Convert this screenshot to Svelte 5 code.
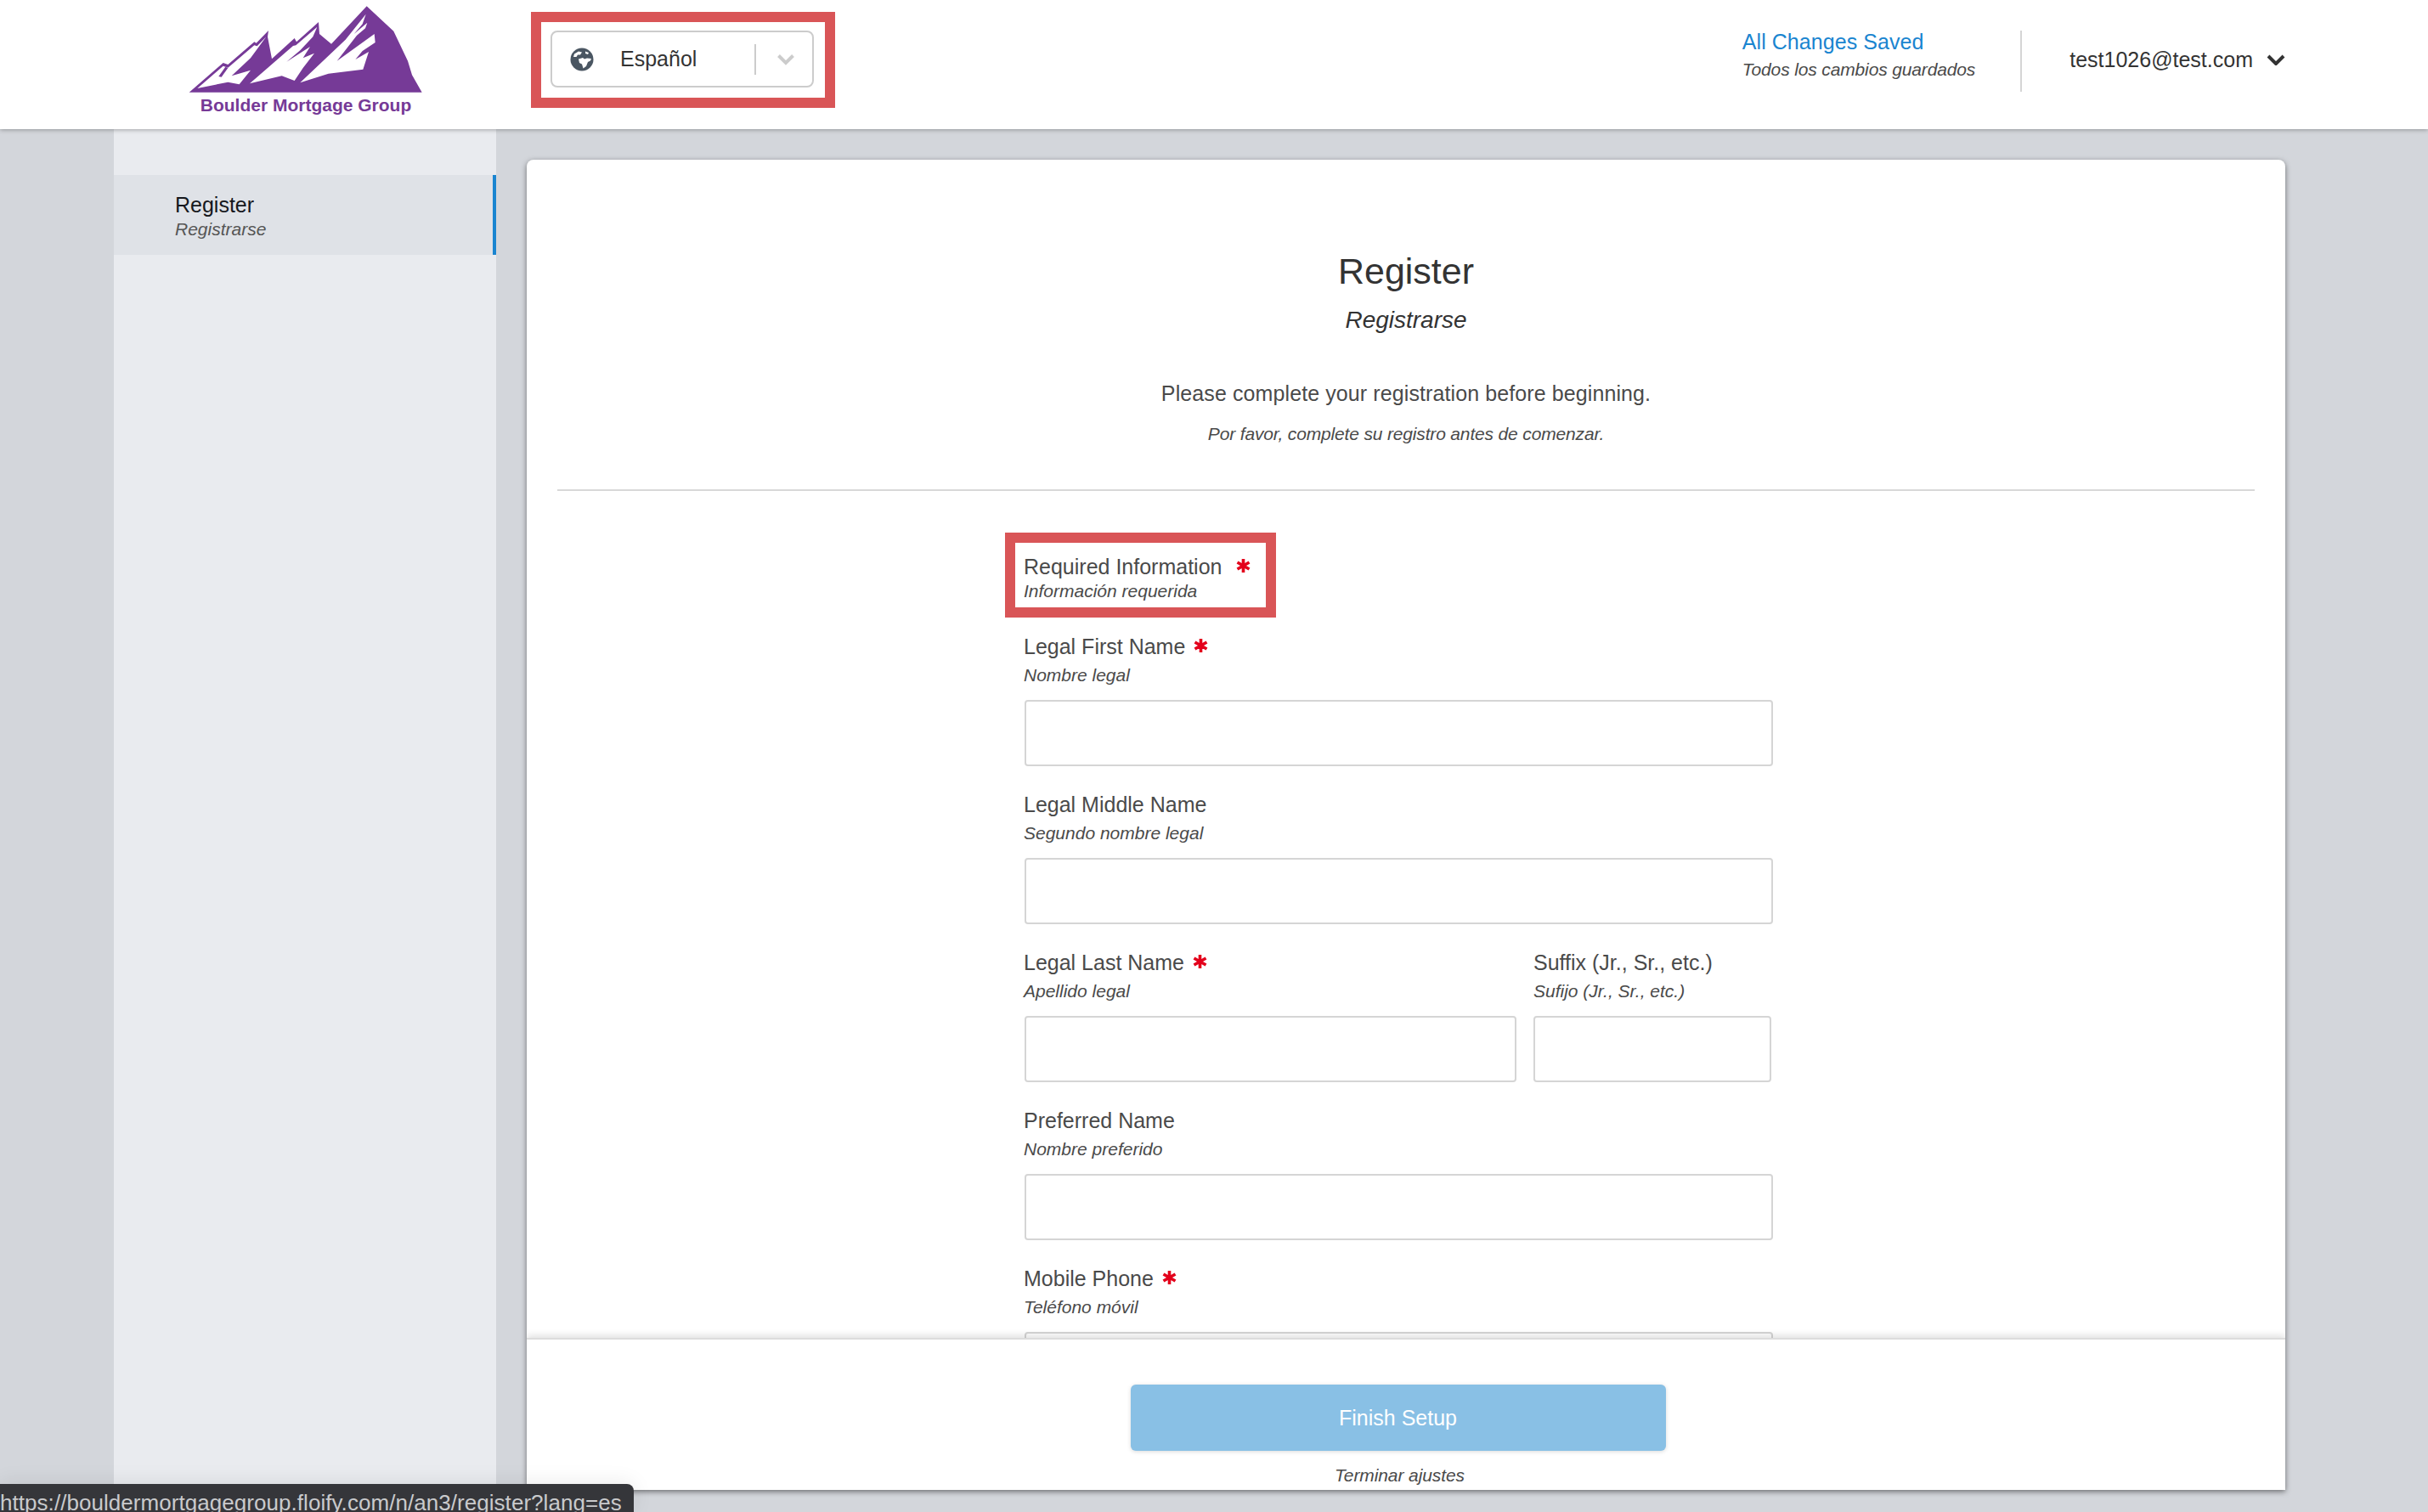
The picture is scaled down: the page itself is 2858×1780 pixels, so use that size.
<script>
  const rows = [
    [{ label: 'Legal First Name', sub: 'Nombre legal', req: true, cls: 'full' }],
    [{ label: 'Legal Middle Name', sub: 'Segundo nombre legal', cls: 'full' }],
    [
      { label: 'Legal Last Name', sub: 'Apellido legal', req: true, cls: 'wide' },
      { label: 'Suffix (Jr., Sr., etc.)', sub: 'Sufijo (Jr., Sr., etc.)', cls: 'narrow' }
    ],
    [{ label: 'Preferred Name', sub: 'Nombre preferido', cls: 'full' }],
    [{ label: 'Mobile Phone', sub: 'Teléfono móvil', req: true, cls: 'full' }]
  ];
</script>

{#snippet star()}
  <svg class="star" viewBox="0 0 16 16" aria-hidden="true">
    <path d="M8 0.5V15.5M1.4 4.2L14.6 11.8M14.6 4.2L1.4 11.8" />
  </svg>
{/snippet}

<div class="page">
  <header class="top">
    <div class="logo">
      <svg class="peaks" viewBox="0 0 960 330" aria-hidden="true">
        <path class="m" d="M68 326L188 222L205 228L298 148L305 152L348 108L345 130L360 208L440 135L447 148L525 78L528 120L570 155L695 22L790 110L840 215L855 265L890 326Z" />
        <path class="w" d="M97 312L188 233L205 239L298 160L308 163L340 130L285 205L218 268L285 248L245 298L205 290Z" />
        <path class="m" d="M172 270L196 236L205 240L182 272Z" />
        <path class="w" d="M282 295L435 162L445 160L520 95L505 130L460 178L412 218L495 165L470 205L510 188L470 240L440 285L395 268Z" />
        <path class="w" d="M460 292L620 140L692 50L680 85L650 120L697 80L690 100L660 125L590 215L722 120L725 150L680 180L655 210L702 183L682 245L560 260Z" />
      </svg>
      <div class="brand">Boulder Mortgage Group</div>
    </div>
    <div class="redbox lang">
      <div class="select">
        <svg class="globe" viewBox="0 0 28 28" aria-hidden="true">
          <circle cx="14" cy="14" r="13.5" fill="#4a5662" />
          <path d="M5 7.5L10 4.5L14 5.5L12 8.5L9 8.5L7.5 11L4 11ZM10 13.5L15 12L17 13.5L20 12.5L25 13L24 15.5L21 17L19 22L15.5 24.5L14 19.5L11 18Z" fill="#fff" />
          <path d="M18 4.5L22 6L21 8L18 7Z" fill="#fff" />
        </svg>
        <span class="lang-name">Español</span>
        <span class="sep"></span>
        <svg class="caret" viewBox="0 0 22 14" aria-hidden="true"><path d="M2.5 2.5L11 11L19.5 2.5" /></svg>
      </div>
    </div>
    <div class="right">
      <div class="saved">
        <div class="saved-en">All Changes Saved</div>
        <div class="saved-es">Todos los cambios guardados</div>
      </div>
      <div class="user">
        <span>test1026@test.com</span>
        <svg class="usercaret" viewBox="0 0 22 13" aria-hidden="true"><path d="M2 2L11 11L20 2" /></svg>
      </div>
    </div>
  </header>

  <div class="body">
    <aside class="side">
      <div class="item">
        <div class="item-en">Register</div>
        <div class="item-es">Registrarse</div>
      </div>
    </aside>
    <main class="card">
      <div class="scroll">
        <h1>Register</h1>
        <div class="h-es">Registrarse</div>
        <p class="intro">Please complete your registration before beginning.</p>
        <p class="intro-es">Por favor, complete su registro antes de comenzar.</p>
        <hr />
        <div class="form">
          <div class="redbox req">
            <div class="lbl">Required Information {@render star()}</div>
            <div class="sub tight">Información requerida</div>
          </div>
          {#each rows as row}
            <div class="row">
              {#each row as f}
                <div class="field {f.cls}">
                  <div class="lbl">{f.label}{#if f.req}{@render star()}{/if}</div>
                  <div class="sub">{f.sub}</div>
                  <div class="input"></div>
                </div>
              {/each}
            </div>
          {/each}
        </div>
      </div>
      <footer class="foot">
        <button class="finish" type="button">Finish Setup</button>
        <div class="finish-es">Terminar ajustes</div>
      </footer>
    </main>
  </div>

  <div class="status">https://bouldermortgagegroup.floify.com/n/an3/register?lang=es</div>
</div>

<style>
  :global(body) { margin: 0; }
  .page {
    position: relative;
    width: 2858px;
    height: 1780px;
    overflow: hidden;
    display: flex;
    flex-direction: column;
    background: #d3d6db;
    font-family: "Liberation Sans", Arial, sans-serif;
    color: #4a4a4a;
  }
  .top {
    position: relative;
    z-index: 2;
    flex: 0 0 152px;
    display: flex;
    align-items: flex-start;
    background: #fff;
    box-shadow: 0 1px 5px rgba(0, 0, 0, 0.3);
    padding-left: 200px;
    padding-right: 168px;
  }
  .logo { width: 320px; }
  .peaks { display: block; width: 320px; height: 110px; }
  .m { fill: #763a97; }
  .w { fill: #fff; }
  .brand {
    text-align: center;
    font-size: 21px;
    line-height: 28px;
    font-weight: 700;
    color: #763a97;
  }
  .redbox { border: 12px solid #d95557; box-sizing: border-box; background: #fff; }
  .lang {
    margin: 14px 0 0 105px;
    width: 358px;
    height: 113px;
    padding: 10px 11px;
  }
  .select {
    box-sizing: border-box;
    height: 67px;
    width: 310px;
    border: 2px solid #ccc;
    border-radius: 8px;
    display: flex;
    align-items: center;
  }
  .globe { width: 28px; height: 28px; margin-left: 21px; }
  .lang-name { margin-left: 31px; font-size: 25px; color: #333; width: 158px; }
  .sep { width: 2px; height: 36px; background: #ccc; }
  .caret { width: 22px; height: 14px; margin-left: 24px; }
  .caret path { fill: none; stroke: #ccc; stroke-width: 4; }
  .right { margin-left: auto; display: flex; height: 72px; margin-top: 36px; }
  .saved { padding-right: 53px; }
  .saved-en { font-size: 25px; line-height: 28px; margin-top: -1px; color: #1a85d0; letter-spacing: 0.06px; }
  .saved-es { font-size: 21px; line-height: 26px; margin-top: 6px; font-style: italic; color: #4a4a4a; letter-spacing: -0.14px; }
  .user {
    border-left: 2px solid #d5d5d5;
    padding-left: 56px;
    padding-bottom: 4px;
    box-sizing: border-box;
    display: flex;
    align-items: center;
    gap: 16px;
    font-size: 25px;
    color: #333;
    height: 72px;
  }
  .usercaret { width: 22px; height: 13px; }
  .usercaret path { fill: none; stroke: #333; stroke-width: 4; }

  .body { flex: 1; display: flex; min-height: 0; padding-left: 134px; }
  .side { width: 450px; background: #e9ebef; padding-top: 54px; box-sizing: border-box; }
  .item {
    box-sizing: border-box;
    height: 94px;
    background: #dfe2e7;
    border-right: 4px solid #1a85d0;
    padding: 21px 0 0 72px;
  }
  .item-en { font-size: 25px; line-height: 28px; color: #16181d; }
  .item-es { margin-top: 2px; font-size: 21px; line-height: 26px; font-style: italic; color: #555; }
  .card {
    width: 2070px;
    margin: 36px 0 26px 36px;
    background: #fff;
    border-radius: 8px 8px 0 0;
    box-shadow: 0 2px 6px rgba(0, 0, 0, 0.5);
    display: flex;
    flex-direction: column;
    overflow: hidden;
  }
  .scroll { flex: 1; min-height: 0; overflow: hidden; padding: 0 36px; }
  h1 {
    margin: 104px 0 0;
    text-align: center;
    font-size: 43px;
    line-height: 54px;
    font-weight: 400;
    color: #333;
  }
  .h-es { margin-top: 14px; text-align: center; font-size: 28px; line-height: 34px; font-style: italic; color: #333; }
  .intro { margin: 53px 0 0; text-align: center; font-size: 25px; line-height: 32px; color: #4a4a4a; letter-spacing: 0.1px; }
  .intro-es { margin: 19px 0 0; text-align: center; font-size: 21px; line-height: 26px; font-style: italic; color: #4a4a4a; letter-spacing: -0.16px; }
  hr { margin: 52px 0 0; border: 0; border-top: 2px solid #d8d8d8; }
  .form { margin-left: 527px; width: 920px; }
  .req {
    margin: 49px 0 0 0;
    width: 319px;
    height: 100px;
    padding: 13px 0 0 10px;
  }
  .lbl { display: flex; align-items: center; font-size: 25px; line-height: 30px; color: #4a4a4a; white-space: pre; }
  .sub { margin-top: 5px; font-size: 21px; line-height: 28px; font-style: italic; color: #4a4a4a; }
  .tight { margin-top: 2px; line-height: 24px; }
  .star { width: 17px; height: 18px; margin-left: 10px; margin-top: -2px; }
  .star path { fill: none; stroke: #e3001b; stroke-width: 3.4; }
  .row { display: flex; gap: 20px; margin-left: 22px; margin-top: 19px; }
  .row + .row { margin-top: 30px; }
  .field { min-width: 0; }
  .full { width: 882px; }
  .wide { width: 580px; }
  .narrow { width: 280px; }
  .input {
    box-sizing: border-box;
    margin-top: 15px;
    margin-left: 1px;
    height: 78px;
    border: 2px solid #d5d5d5;
    border-radius: 4px;
    background: #fff;
  }
  .narrow .input { margin-left: 0; }
  .foot {
    position: relative;
    flex: 0 0 179px;
    background: #fff;
    border-top: 2px solid #dcdcdc;
    box-sizing: border-box;
    box-shadow: 0 -3px 8px rgba(0, 0, 0, 0.12);
    text-align: center;
    padding-top: 53px;
    padding-right: 19px;
  }
  .finish {
    display: block;
    margin: 0 auto;
    width: 630px;
    height: 78px;
    border: 0;
    border-radius: 6px;
    background: #89c0e5;
    color: #fff;
    font: 25px "Liberation Sans", Arial, sans-serif;
    box-shadow: 0 1px 5px rgba(0, 0, 0, 0.15);
  }
  .finish-es { margin-top: 16px; font-size: 21px; line-height: 26px; font-style: italic; color: #4a4a4a; letter-spacing: -0.1px; padding-left: 4px; }
  .status {
    position: absolute;
    left: 0;
    bottom: 0;
    z-index: 3;
    box-sizing: border-box;
    width: 746px;
    height: 33px;
    padding-top: 7px;
    background: #35363a;
    border-top-right-radius: 8px;
    box-shadow: 0 -2px 24px rgba(0, 0, 0, 0.08);
    color: #c9cacc;
    font-size: 26px;
    letter-spacing: 0.05px;
    line-height: 30px;
    white-space: nowrap;
    overflow: hidden;
  }
</style>
